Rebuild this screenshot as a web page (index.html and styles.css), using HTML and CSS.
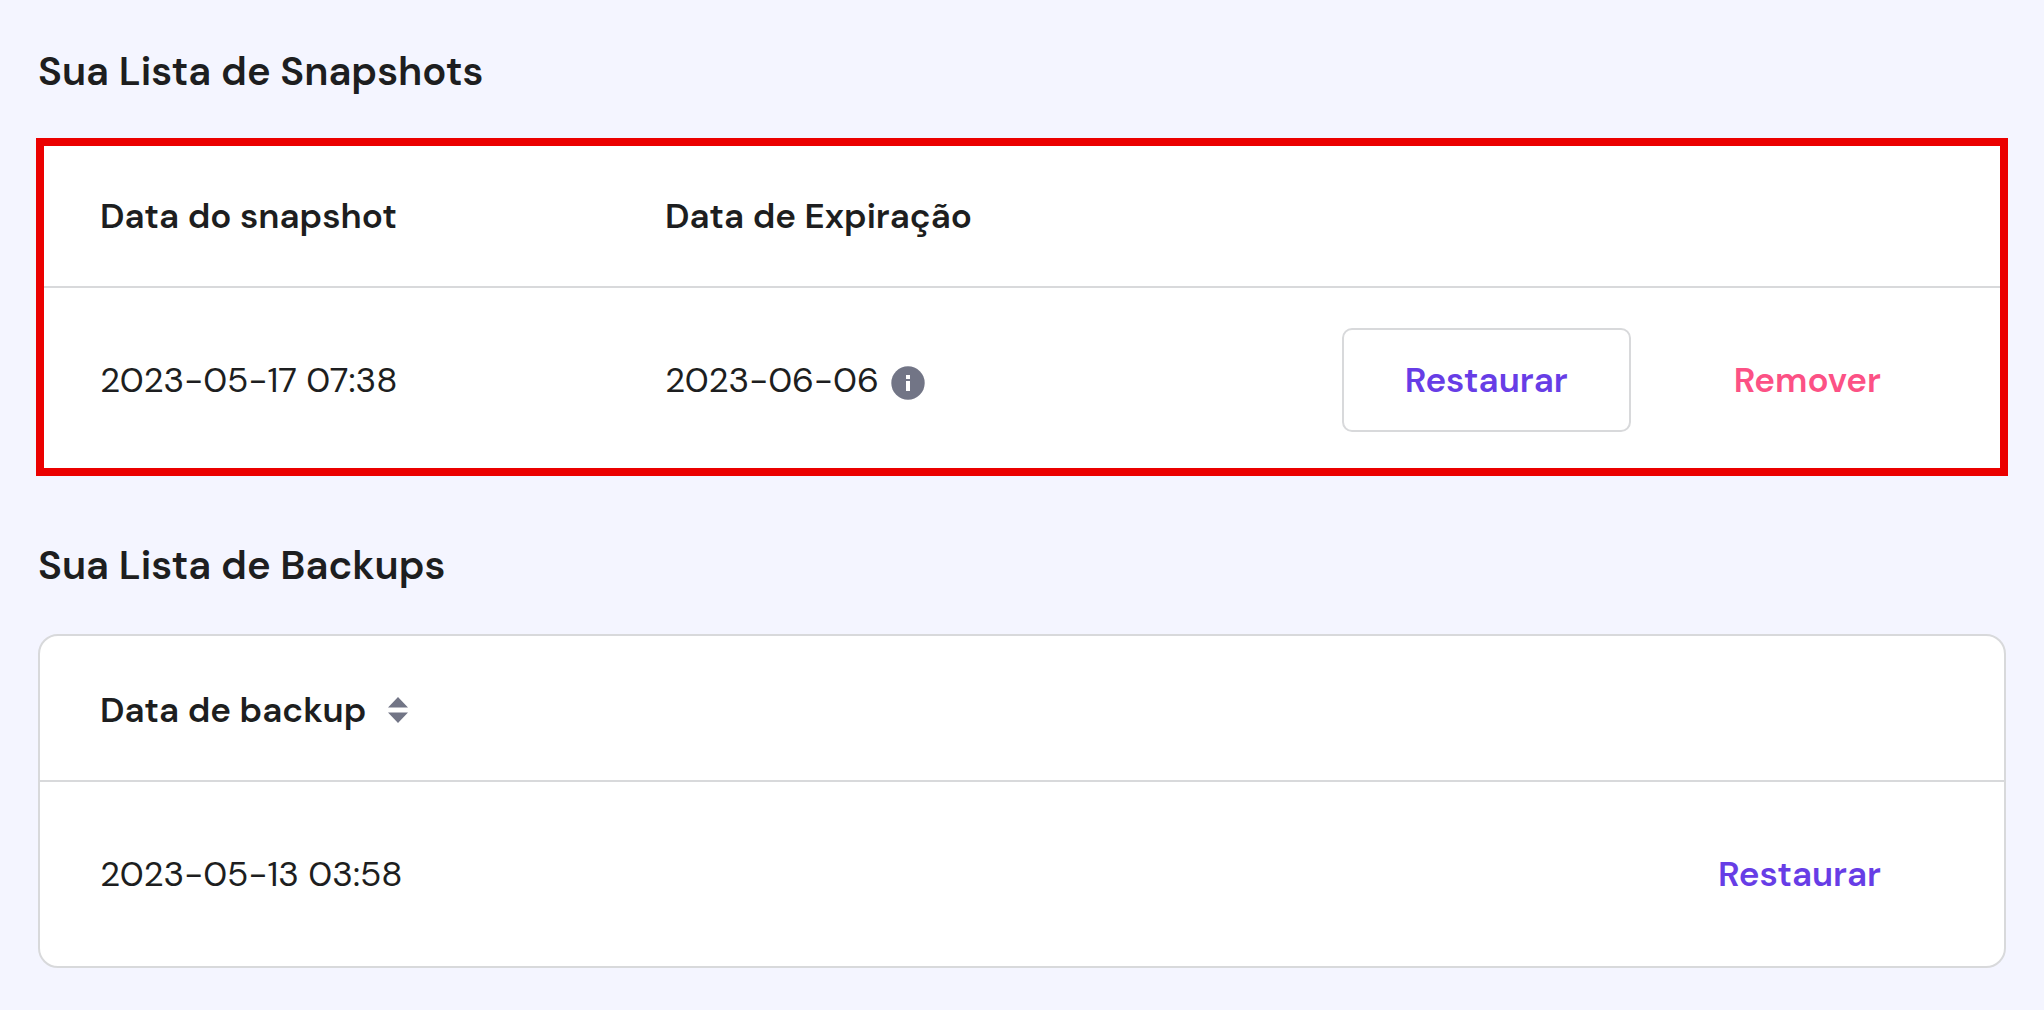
FILE: index.html
```html
<!DOCTYPE html>
<html lang="pt-BR">
<head>
<meta charset="utf-8">
<meta name="viewport" content="width=device-width, initial-scale=1">
<title>Snapshots e Backups</title>
<link rel="stylesheet" href="styles.css">
</head>
<body>
<main class="page">
  <section class="section">
    <h2 class="section-title">Sua Lista de Snapshots</h2>
    <div class="card card-highlight">
      <table class="table">
        <thead>
          <tr>
            <th class="col-date" scope="col">Data do snapshot</th>
            <th class="col-expiry" scope="col">Data de Expiração</th>
            <td></td>
          </tr>
        </thead>
        <tbody>
          <tr>
            <td>2023-05-17 07:38</td>
            <td>
              <span class="with-icon">2023-06-06
                <svg class="info-icon" viewBox="0 0 34 40" role="img" aria-label="Informação">
                  <circle cx="17" cy="23" r="16.700" fill="#727586"/>
                  <path d="M15 15h4v4h-4zM15 21h4v10h-4z" fill="#fff"/>
                </svg>
              </span>
            </td>
            <td>
              <div class="actions">
                <button class="btn btn-outline" type="button">Restaurar</button>
                <button class="btn btn-danger" type="button">Remover</button>
              </div>
            </td>
          </tr>
        </tbody>
      </table>
    </div>
  </section>

  <section class="section">
    <h2 class="section-title">Sua Lista de Backups</h2>
    <div class="card">
      <table class="table">
        <thead>
          <tr>
            <th scope="col">
              <button class="sort" type="button">Data de backup
                <svg class="sort-icon" viewBox="0 0 20 26" aria-hidden="true">
                  <path d="M10 0l10 10.500H0zM0 15.500h20L10 26z" fill="#727586"/>
                </svg>
              </button>
            </th>
            <td></td>
          </tr>
        </thead>
        <tbody>
          <tr>
            <td>2023-05-13 03:58</td>
            <td>
              <div class="actions">
                <button class="btn" type="button">Restaurar</button>
              </div>
            </td>
          </tr>
        </tbody>
      </table>
    </div>
  </section>
</main>
</body>
</html>
```
FILE: styles.css
```css
* {
  box-sizing: border-box;
}

body {
  margin: 0;
  background: #f4f5ff;
  color: #1d1e20;
  font-family: "DM Sans", Inter, sans-serif;
  font-size: 35px;
  line-height: 48px;
}

.page {
  display: flex;
  flex-direction: column;
  gap: 67px;
  padding: 47px 38px 40px;
}

.section-title {
  margin: 0 0 45px;
  font-size: 40px;
  font-weight: 600;
  line-height: 48px;
}

.card {
  border: 2px solid #d8d9db;
  border-radius: 20px;
  background: #fff;
}

.card-highlight {
  border-radius: 0;
  outline: 8px solid #eb0000;
  outline-offset: -6px;
}

.table {
  width: 100%;
  border-collapse: separate;
  border-spacing: 0;
}

.table th,
.table td {
  padding: 0 60px;
  text-align: left;
  white-space: nowrap;
}

.table th {
  font-weight: 600;
}

.table thead th,
.table thead td {
  height: 146px;
  padding-top: 3px;
  border-bottom: 2px solid #d8d9db;
}

.table tbody td {
  height: 184px;
}

.col-date,
.col-expiry {
  width: 565px;
}

.with-icon,
.sort {
  display: flex;
  align-items: center;
}

.with-icon {
  gap: 12px;
}

.info-icon {
  width: 34px;
  height: 40px;
}

.sort {
  gap: 22px;
  padding: 0;
  border: 0;
  background: none;
  color: inherit;
  font: inherit;
  cursor: pointer;
}

.sort-icon {
  width: 20px;
  height: 26px;
}

.actions {
  display: flex;
  justify-content: flex-end;
  gap: 40px;
}

.btn {
  height: 104px;
  padding: 0 61px;
  border: 2px solid transparent;
  border-radius: 10px;
  background: none;
  color: #673de6;
  font: inherit;
  font-weight: 600;
  cursor: pointer;
}

.btn-outline {
  border-color: #d8d9db;
}

.btn-danger {
  color: #fc5185;
}
```
